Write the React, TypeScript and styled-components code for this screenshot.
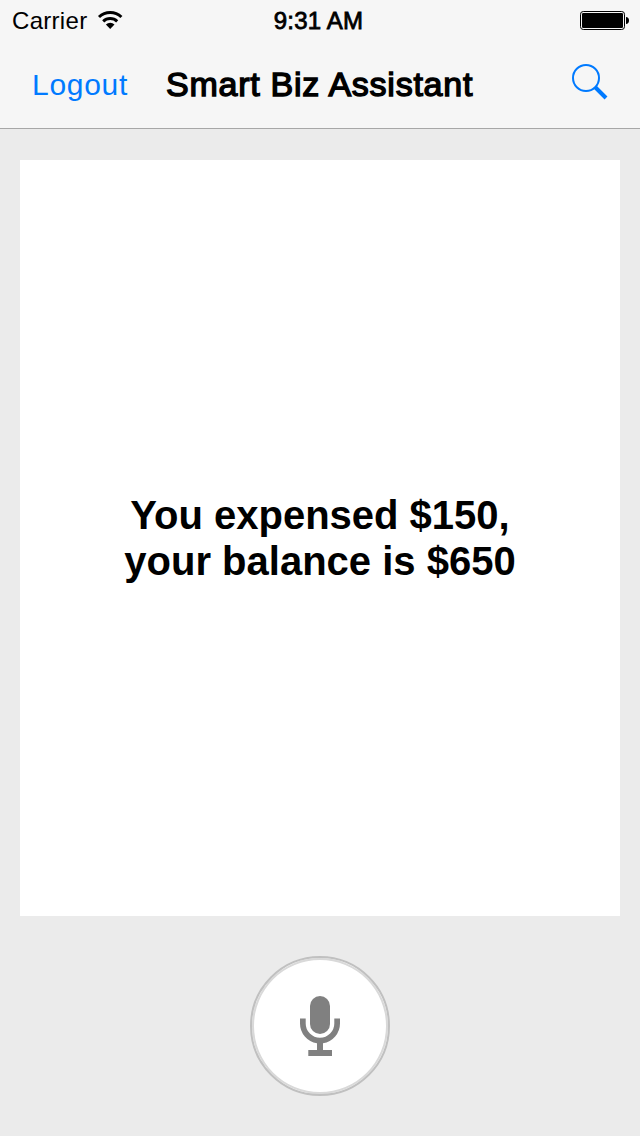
import React from "react";
import styled, { createGlobalStyle } from "styled-components";

const GlobalStyle = createGlobalStyle`
  *, *::before, *::after { box-sizing: border-box; }
  body {
    margin: 0;
    background: #ebebeb;
    color: #000;
    font-family: "Liberation Sans", Arial, sans-serif;
  }
`;

const Screen = styled.div`
  display: flex;
  flex-direction: column;
  width: 640px;
  height: 1136px;
  overflow: hidden;
  background: #ebebeb;
`;

const Header = styled.header`
  height: 129px;
  flex: none;
  background: #f6f6f6;
  border-bottom: 1px solid #a7a7a7;
`;

const StatusBar = styled.div`
  display: grid;
  grid-template-columns: 1fr auto 1fr;
  align-items: center;
  height: 40px;
  padding: 0 11px;
`;

const CarrierGroup = styled.div`
  display: flex;
  align-items: center;
  gap: 10px;
  padding-left: 1px;
`;

const Label = styled.span<{ $size: number; $spacing?: number; $stroke?: number }>`
  font-size: ${(p) => p.$size}px;
  line-height: 40px;
  letter-spacing: ${(p) => p.$spacing ?? 0}px;
  -webkit-text-stroke: ${(p) => p.$stroke ?? 0}px currentColor;
  white-space: nowrap;
`;

const StatusLabel = styled(Label)`
  padding-top: 2px;
  line-height: 38px;
`;

const Clock = styled(StatusLabel)`
  margin-right: 3px;
`;

const Battery = styled.svg`
  justify-self: end;
`;

const NavBar = styled.nav`
  display: grid;
  grid-template-columns: 134px 1fr 134px;
  align-items: center;
  height: 88px;
  padding: 0 32px;
`;

const NavButton = styled.button`
  display: flex;
  align-items: center;
  padding: 2px 0 0;
  border: 0;
  background: none;
  color: #007aff;
  font-family: inherit;
`;

const SearchButton = styled(NavButton)`
  justify-self: end;
  padding: 0 0 4px;
`;

const Title = styled.h1`
  margin: 0;
  font-weight: 400;
  line-height: 40px;
`;

const Card = styled.main`
  display: flex;
  align-items: center;
  justify-content: center;
  flex: none;
  height: 756px;
  margin: 31px 20px 0;
  background: #fff;
`;

const Message = styled.p`
  margin: 0;
  font-size: 40px;
  font-weight: 700;
  line-height: 46px;
  text-align: center;
`;

const Footer = styled.footer`
  display: flex;
  justify-content: center;
  padding-top: 40px;
`;

const MicButton = styled.button`
  display: flex;
  align-items: center;
  justify-content: center;
  width: 140px;
  height: 140px;
  padding: 0;
  border: 2px solid #c0c0c0;
  border-radius: 50%;
  background: #fff;
  box-shadow: inset 0 0 0 2px #d9d9d9;
`;

export default function App() {
  return (
    <Screen>
      <GlobalStyle />
      <Header>
        <StatusBar>
          <CarrierGroup>
            <StatusLabel $size={24} $spacing={0.3}>Carrier</StatusLabel>
            <svg width="26" height="20" viewBox="0 0 26 20">
              <g fill="none" stroke="#000" strokeWidth="3">
                <path d="M2 7A16.5 16.5 0 0 1 24.4 7" />
                <path d="M6.2 11.3A10.2 10.2 0 0 1 20.2 11.3" />
              </g>
              <path d="M8.9 14.4A6.4 6.4 0 0 1 17.5 14.4L13.2 18.9Z" />
            </svg>
          </CarrierGroup>
          <Clock $size={24} $spacing={0.2} $stroke={0.8}>9:31 AM</Clock>
          <Battery width="49" height="20" viewBox="0 0 49 20">
            <rect x="0.5" y="1.5" width="44" height="18" rx="2.8" fill="none" stroke="#000" />
            <rect x="2" y="3" width="41" height="15" rx="1.2" />
            <path d="M46 7C47.8 7 49 8.5 49 10.5S47.8 14 46 14Z" />
          </Battery>
        </StatusBar>
        <NavBar>
          <NavButton>
            <Label $size={30} $spacing={0.7}>Logout</Label>
          </NavButton>
          <Title>
            <Label $size={34} $spacing={0.75} $stroke={1.4}>Smart Biz Assistant</Label>
          </Title>
          <SearchButton aria-label="Search">
            <svg width="36" height="36" viewBox="0 0 36 36" fill="none" stroke="#007aff">
              <circle cx="14" cy="14" r="13" strokeWidth="2" />
              <path d="M23 23L34 34" strokeWidth="4" />
            </svg>
          </SearchButton>
        </NavBar>
      </Header>
      <Card>
        <Message>
          You expensed $150,
          <br />
          your balance is $650
        </Message>
      </Card>
      <Footer>
        <MicButton aria-label="Speak">
          <svg width="40" height="60" viewBox="0 0 40 60" fill="#808080">
            <rect x="10" y="0" width="20" height="38" rx="10" />
            <path d="M0 22.5H5.7V27.5A14.3 14.3 0 0 0 34.3 27.5V22.5H40V27.5A20 20 0 0 1 23 47.3V54H32V60H8.3V54H17V47.3A20 20 0 0 1 0 27.5Z" />
          </svg>
        </MicButton>
      </Footer>
    </Screen>
  );
}
